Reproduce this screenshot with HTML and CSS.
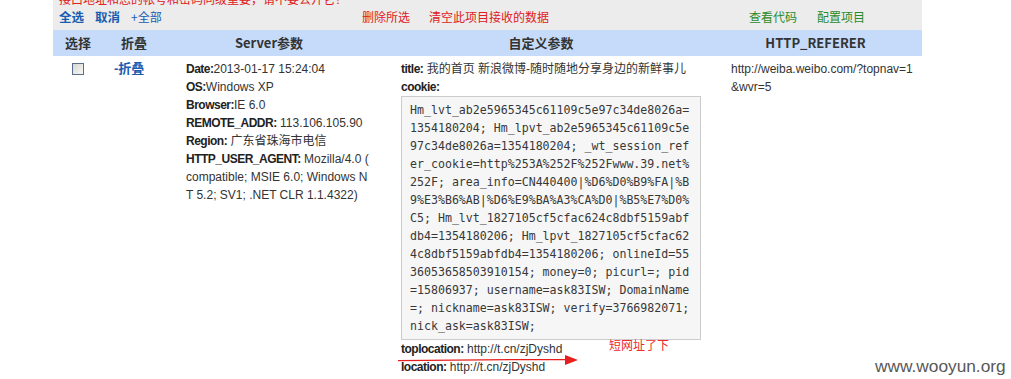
FILE: index.html
```html
<!DOCTYPE html>
<html lang="zh-CN">
<head>
<meta charset="utf-8">
<title>项目接收数据</title>
<link rel="stylesheet" href="styles.css">
</head>
<body>
<div class="wrap">
  <div class="toolbar">
    <div class="notice">接口地址和您的帐号和密码同级重要，请不要公开它！</div>
    <div class="actions">
      <div class="group g1">
        <a class="lnk strong">全选</a>
        <a class="lnk strong">取消</a>
        <a class="lnk">+全部</a>
      </div>
      <div class="group g2">
        <a class="red">删除所选</a>
        <a class="red">清空此项目接收的数据</a>
      </div>
      <div class="group g3">
        <a class="green">查看代码</a>
        <a class="green">配置项目</a>
      </div>
    </div>
  </div>

  <div class="grid head">
    <div class="th">选择</div>
    <div class="th">折叠</div>
    <div class="th">Server参数</div>
    <div class="th">自定义参数</div>
    <div class="th">HTTP_REFERER</div>
  </div>

  <div class="grid row">
    <div class="td c1"><span class="check"></span></div>
    <div class="td c2"><a class="fold">-折叠</a></div>
    <div class="td c3">
      <div><b>Date:</b>2013-01-17 15:24:04</div>
      <div><b>OS:</b>Windows XP</div>
      <div><b>Browser:</b>IE 6.0</div>
      <div><b>REMOTE_ADDR:</b> 113.106.105.90</div>
      <div><b>Region:</b> 广东省珠海市电信</div>
      <div class="brk"><b>HTTP_USER_AGENT:</b> Mozilla/4.0 (<wbr>compatible; MSIE 6.0; Windows NT 5.2; SV1; .NET CLR 1.1.4322)</div>
    </div>
    <div class="td c4">
      <div><b>title:</b> 我的首页 新浪微博-随时随地分享身边的新鲜事儿</div>
      <div><b>cookie:</b></div>
      <pre class="cookie">Hm_lvt_ab2e5965345c61109c5e97c34de8026a=1354180204; Hm_lpvt_ab2e5965345c61109c5e97c34de8026a=1354180204; _wt_session_refer_cookie=http%253A%252F%252Fwww.39.net%252F; area_info=CN440400|%D6%D0%B9%FA|%B9%E3%B6%AB|%D6%E9%BA%A3%CA%D0|%B5%E7%D0%C5; Hm_lvt_1827105cf5cfac624c8dbf5159abfdb4=1354180206; Hm_lpvt_1827105cf5cfac624c8dbf5159abfdb4=1354180206; onlineId=5536053658503910154; money=0; picurl=; pid=15806937; username=ask83ISW; DomainName=; nickname=ask83ISW; verify=3766982071; nick_ask=ask83ISW;</pre>
      <div><b>toplocation:</b> http://t.cn/zjDyshd</div>
      <div><b>location:</b> http://t.cn/zjDyshd</div>
    </div>
    <div class="td c5 brk">http://weiba.weibo.com/?topnav=1&amp;wvr=5</div>
  </div>
</div>

<div class="note">短网址了下</div>
<svg class="arrow" width="190" height="20" viewBox="0 0 190 20">
  <path d="M3 10.6 Q80 10 120 9.6 L172 9.6" fill="none" stroke="#e61e1e" stroke-width="1.4"/>
  <polygon points="170,5 183,10 170,15" fill="#e61e1e"/>
</svg>
<div class="watermark">www.wooyun.org</div>
</body>
</html>
```

FILE: styles.css
```css
html, body {
  margin: 0;
  padding: 0;
  background: #ffffff;
}

body {
  font-family: "Liberation Sans", "Noto Sans CJK SC", sans-serif;
  font-size: 12px;
  color: #333333;
  overflow: hidden;
  height: 379px;
  position: relative;
}

.wrap {
  margin-left: 53px;
  width: 869px;
  margin-top: -9px;
}

/* toolbar */
.toolbar {
  background: #ececec;
  padding-left: 6px;
  font-family: "Noto Sans CJK SC", "Liberation Sans", sans-serif;
}

.notice {
  color: #e02020;
  font-size: 12px;
  line-height: 16px;
  height: 16px;
  white-space: nowrap;
}

.actions {
  display: grid;
  grid-template-columns: 303px 387px auto;
  line-height: 20px;
  padding-bottom: 3px;
  font-size: 12px;
}

.group {
  display: flex;
}

.g1 { gap: 11px; }
.g2 { gap: 19px; }
.g3 { gap: 20px; }

.lnk { color: #1a5cb0; }
.strong { font-weight: bold; font-size: 12.5px; }
.red { color: #e02020; }
.green { color: #2a8a2a; }

/* table grid */
.grid {
  display: grid;
  grid-template-columns: 50px 62px 208px 336px 213px;
}

.head {
  background: #c6dbf9;
  height: 26px;
  align-items: center;
}

.th {
  text-align: center;
  font-family: "Noto Sans CJK SC", "Liberation Sans", sans-serif;
  font-weight: bold;
  font-size: 13px;
  color: #333333;
  line-height: 26px;
}

.row {
  line-height: 18px;
}

.td {
  padding-top: 4px;
}

.td b {
  color: #222222;
  letter-spacing: -0.5px;
}

.c1 {
  display: flex;
  justify-content: center;
  padding-top: 7px;
}

.check {
  display: block;
  width: 10px;
  height: 10px;
  border: 1px solid #5a6e88;
  background: linear-gradient(135deg, #d6d6d2, #f7f7f5);
}

.c2 {
  padding-left: 11px;
}

.fold {
  color: #1a5cb0;
  font-weight: bold;
  font-size: 13px;
  font-family: "Liberation Sans", "Noto Sans CJK SC", sans-serif;
}

.c3 {
  padding-left: 21px;
}

.brk {
  word-break: break-all;
}

.c4 {
  padding-left: 28px;
}

.cookie {
  margin: 0;
  width: 282px;
  padding: 4px 8px;
  border: 1px solid #cccccc;
  background: #f6f6f6;
  font-family: "DejaVu Sans Mono", "Liberation Mono", monospace;
  font-size: 11.6px;
  line-height: 18px;
  color: #383838;
  white-space: pre-wrap;
  word-break: break-all;
}

.c5 {
  padding-left: 22px;
  padding-right: 5px;
}

/* annotations over content */
.note {
  position: absolute;
  left: 609px;
  top: 336px;
  color: #ee2a2a;
  font-family: "Noto Sans CJK SC", sans-serif;
  font-size: 12px;
  line-height: 18px;
}

.arrow {
  position: absolute;
  left: 395px;
  top: 350px;
}

.watermark {
  position: absolute;
  left: 875px;
  top: 356px;
  font-family: "Liberation Sans", sans-serif;
  font-size: 17.3px;
  line-height: 20px;
  color: #585858;
}
```
